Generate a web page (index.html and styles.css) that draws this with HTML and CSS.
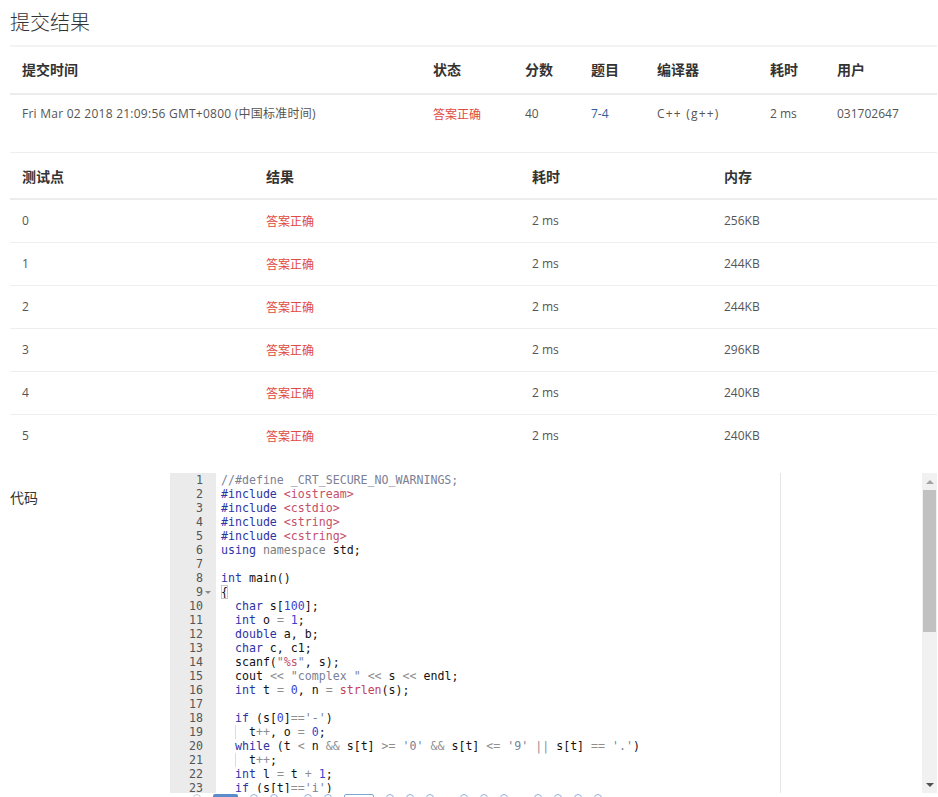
FILE: index.html
```html
<!DOCTYPE html>
<html lang="zh-CN">
<head>
<meta charset="utf-8">
<title>提交结果</title>
<link rel="stylesheet" href="styles.css">
</head>
<body>
<div class="page">
  <h1 class="title">提交结果</h1>

  <table class="tbl summary">
    <thead>
      <tr><th>提交时间</th><th>状态</th><th>分数</th><th>题目</th><th>编译器</th><th>耗时</th><th>用户</th></tr>
    </thead>
    <tbody>
      <tr>
        <td class="date">Fri Mar 02 2018 21:09:56 GMT+0800 (中国标准时间)</td>
        <td class="ok">答案正确</td>
        <td>40</td>
        <td><a class="link" href="#">7-4</a></td>
        <td class="wide">C++ (g++)</td>
        <td>2 ms</td>
        <td>031702647</td>
      </tr>
    </tbody>
  </table>

  <table class="tbl cases">
    <thead>
      <tr><th>测试点</th><th>结果</th><th>耗时</th><th>内存</th></tr>
    </thead>
    <tbody>
      <tr><td>0</td><td class="ok">答案正确</td><td>2 ms</td><td>256KB</td></tr>
      <tr><td>1</td><td class="ok">答案正确</td><td>2 ms</td><td>244KB</td></tr>
      <tr><td>2</td><td class="ok">答案正确</td><td>2 ms</td><td>244KB</td></tr>
      <tr><td>3</td><td class="ok">答案正确</td><td>2 ms</td><td>296KB</td></tr>
      <tr><td>4</td><td class="ok">答案正确</td><td>2 ms</td><td>240KB</td></tr>
      <tr><td>5</td><td class="ok">答案正确</td><td>2 ms</td><td>240KB</td></tr>
    </tbody>
  </table>

  <div class="code-sec">
    <div class="code-label">代码</div>
    <div class="editor">
      <div class="gutter">
        <div class="gl"><span>1</span><i class="fold"></i></div>
        <div class="gl"><span>2</span><i class="fold"></i></div>
        <div class="gl"><span>3</span><i class="fold"></i></div>
        <div class="gl"><span>4</span><i class="fold"></i></div>
        <div class="gl"><span>5</span><i class="fold"></i></div>
        <div class="gl"><span>6</span><i class="fold"></i></div>
        <div class="gl"><span>7</span><i class="fold"></i></div>
        <div class="gl"><span>8</span><i class="fold"></i></div>
        <div class="gl"><span>9</span><i class="fold open"></i></div>
        <div class="gl"><span>10</span><i class="fold"></i></div>
        <div class="gl"><span>11</span><i class="fold"></i></div>
        <div class="gl"><span>12</span><i class="fold"></i></div>
        <div class="gl"><span>13</span><i class="fold"></i></div>
        <div class="gl"><span>14</span><i class="fold"></i></div>
        <div class="gl"><span>15</span><i class="fold"></i></div>
        <div class="gl"><span>16</span><i class="fold"></i></div>
        <div class="gl"><span>17</span><i class="fold"></i></div>
        <div class="gl"><span>18</span><i class="fold"></i></div>
        <div class="gl"><span>19</span><i class="fold"></i></div>
        <div class="gl"><span>20</span><i class="fold"></i></div>
        <div class="gl"><span>21</span><i class="fold"></i></div>
        <div class="gl"><span>22</span><i class="fold"></i></div>
        <div class="gl"><span>23</span><i class="fold"></i></div>
      </div>
      <div class="code">
        <div class="ln"><span class="c">//#define _CRT_SECURE_NO_WARNINGS;</span></div>
        <div class="ln"><span class="k">#include</span> <span class="s">&lt;iostream&gt;</span></div>
        <div class="ln"><span class="k">#include</span> <span class="s">&lt;cstdio&gt;</span></div>
        <div class="ln"><span class="k">#include</span> <span class="s">&lt;string&gt;</span></div>
        <div class="ln"><span class="k">#include</span> <span class="s">&lt;cstring&gt;</span></div>
        <div class="ln"><span class="k">using</span> <span class="ns">namespace</span> std;</div>
        <div class="ln"> </div>
        <div class="ln"><span class="k">int</span> main()</div>
        <div class="ln"><span class="br">{</span></div>
        <div class="ln">  <span class="k">char</span> s[<span class="n">100</span>];</div>
        <div class="ln">  <span class="k">int</span> o <span class="op">=</span> <span class="n">1</span>;</div>
        <div class="ln">  <span class="k">double</span> a, b;</div>
        <div class="ln">  <span class="k">char</span> c, c1;</div>
        <div class="ln">  scanf(<span class="str">"<span class="fmt">%s</span>"</span>, s);</div>
        <div class="ln">  cout <span class="op">&lt;&lt;</span> <span class="str">"complex "</span> <span class="op">&lt;&lt;</span> s <span class="op">&lt;&lt;</span> endl;</div>
        <div class="ln">  <span class="k">int</span> t <span class="op">=</span> <span class="n">0</span>, n <span class="op">=</span> <span class="sup">strlen</span>(s);</div>
        <div class="ln"> </div>
        <div class="ln">  <span class="k">if</span> (s[<span class="n">0</span>]<span class="op">==</span><span class="str">'-'</span>)</div>
        <div class="ln">  <span class="ind">  </span>t<span class="op">++</span>, o <span class="op">=</span> <span class="n">0</span>;</div>
        <div class="ln">  <span class="k">while</span> (t <span class="op">&lt;</span> n <span class="op">&amp;&amp;</span> s[t] <span class="op">&gt;=</span> <span class="str">'0'</span> <span class="op">&amp;&amp;</span> s[t] <span class="op">&lt;=</span> <span class="str">'9'</span> <span class="op">||</span> s[t] <span class="op">==</span> <span class="str">'.'</span>)</div>
        <div class="ln">  <span class="ind">  </span>t<span class="op">++</span>;</div>
        <div class="ln">  <span class="k">int</span> l <span class="op">=</span> t <span class="op">+</span> <span class="n">1</span>;</div>
        <div class="ln">  <span class="k">if</span> (s[t]<span class="op">==</span><span class="str">'i'</span>)</div>
      </div>
      <div class="vscroll">
        <div class="sb-btn"><i class="arr up"></i></div>
        <div class="sb-thumb"></div>
        <div class="sb-track"></div>
        <div class="sb-btn"><i class="arr down"></i></div>
      </div>
    </div>
  </div>

  <div class="peek">
    <i class="pk dot g"></i>
    <i class="pk bar"></i>
    <i class="pk dot"></i>
    <i class="pk dot"></i>
    <i class="pk dot w1"></i>
    <i class="pk dot"></i>
    <i class="pk box"></i>
    <i class="pk dot"></i>
    <i class="pk dot"></i>
    <i class="pk dot"></i>
    <i class="pk dot w1"></i>
    <i class="pk dot"></i>
    <i class="pk dot"></i>
    <i class="pk dot w1"></i>
    <i class="pk dot"></i>
    <i class="pk dot"></i>
    <i class="pk dot"></i>
  </div>
</div>
</body>
</html>
```

FILE: styles.css
```css
html, body {
  margin: 0;
  padding: 0;
  background: #fff;
  overflow: hidden;
}

body {
  font-family: "Open Sans", "Noto Sans CJK SC", sans-serif;
  color: #555;
  font-size: 12px;
}

.page {
  padding: 0 1px 0 10px;
}

.title {
  margin: 0;
  padding-top: 8px;
  font-family: "Noto Sans CJK SC", sans-serif;
  font-size: 20px;
  line-height: 28px;
  font-weight: 300;
  color: #333;
}

.tbl {
  width: 927px;
  table-layout: fixed;
  border-collapse: separate;
  border-spacing: 0;
}

.tbl th {
  text-align: left;
  font-family: "Noto Sans CJK SC", sans-serif;
  font-size: 14px;
  font-weight: bold;
  color: #333;
  line-height: 18px;
  padding: 13px 12px 15px;
  border-bottom: 2px solid #ececec;
}

.tbl td {
  text-align: left;
  font-size: 12px;
  line-height: 18px;
  color: #555;
  padding: 12px 12px;
  border-bottom: 1px solid #eeeeee;
  white-space: nowrap;
}

.summary {
  margin-top: 9px;
}

.summary th {
  border-top: 2px solid #f3f3f3;
}

.summary td {
  padding: 10px 12px 29px;
}

.summary td.date {
  letter-spacing: 0.25px;
}

.summary td.wide {
  letter-spacing: 1.2px;
}

.summary th:nth-child(1) { width: 387px; }
.summary th:nth-child(2) { width: 68px; }
.summary th:nth-child(3) { width: 42px; }
.summary th:nth-child(4) { width: 42px; }
.summary th:nth-child(5) { width: 89px; }
.summary th:nth-child(6) { width: 43px; }
.summary th:nth-child(7) { width: 88px; }

.cases th {
  padding: 14px 12px 13px;
}

.cases th:nth-child(1) { width: 220px; }
.cases th:nth-child(2) { width: 242px; }
.cases th:nth-child(3) { width: 168px; }
.cases th:nth-child(4) { width: 201px; }

.cases tbody tr:last-child td {
  border-bottom: none;
}

.ok {
  font-family: "Noto Sans CJK SC", sans-serif;
}

.tbl td.ok {
  color: #e04a3f;
}

.link {
  color: #2f6196;
  text-decoration: none;
}

/* code section */
.code-sec {
  display: flex;
  margin-top: 16px;
}

.code-label {
  width: 160px;
  flex: none;
  padding-top: 15px;
  font-family: "Noto Sans CJK SC", sans-serif;
  font-size: 14px;
  line-height: 18px;
  color: #333;
}

.editor {
  flex: 1;
  display: flex;
  height: 320px;
  overflow: hidden;
  font-family: "DejaVu Sans Mono", "Liberation Mono", monospace;
  font-size: 11.6px;
  line-height: 14px;
  background: #fff;
}

.gutter {
  width: 46px;
  flex: none;
  background: #ebebeb;
  color: #555;
}

.gl {
  display: flex;
  justify-content: flex-end;
  padding-right: 3px;
  height: 14px;
}

.fold {
  width: 10px;
  flex: none;
  display: flex;
  align-items: center;
  justify-content: center;
}

.fold.open::before {
  content: "";
  border-left: 3px solid transparent;
  border-right: 3px solid transparent;
  border-top: 3px solid #8a8a8a;
  margin-top: 1px;
}

.code {
  flex: 1;
  padding-left: 5px;
  color: #111;
  overflow: hidden;
  background: linear-gradient(to right, transparent 564px, #e6e6e6 564px, #e6e6e6 565px, transparent 565px);
}

.ln {
  height: 14px;
  white-space: pre;
}

.c { color: #7b8096; }
.k { color: #2c33a6; }
.s { color: #c4506a; }
.ns { color: #7d7d7d; }
.n { color: #3a3fd0; }
.str { color: #7a7f98; }
.fmt { color: #c4506a; }
.op { color: #8e8e8e; }
.sup { color: #c0405e; }
.br { outline: 1px solid #c8c8c8; outline-offset: -1px; }
.ind { background: linear-gradient(to right, #dcdcdc 0, #dcdcdc 1px, transparent 1px); }

.vscroll {
  width: 15px;
  flex: none;
  display: flex;
  flex-direction: column;
  background: #f1f1f1;
}

.sb-btn {
  height: 17px;
  flex: none;
  display: flex;
  align-items: center;
  justify-content: center;
}

.arr {
  width: 0;
  height: 0;
  border-left: 4px solid transparent;
  border-right: 4px solid transparent;
}

.arr.up {
  border-bottom: 4px solid #a3a3a3;
}

.arr.down {
  border-top: 4px solid #505050;
}

.sb-thumb {
  height: 142px;
  flex: none;
  margin: 0 1px;
  background: #c1c1c1;
}

.sb-track {
  flex: 1;
}

/* peek of the toolbar below */
.peek {
  display: flex;
  align-items: flex-start;
  height: 4px;
  padding-top: 1px;
  padding-left: 183px;
  gap: 12px;
}

.pk {
  display: block;
  flex: none;
}

.pk.dot {
  width: 8px;
  height: 8px;
  border: 1px solid #8fb0da;
  border-radius: 50%;
  box-sizing: border-box;
}

.pk.dot.g {
  border-color: #c0c6d2;
}

.pk.dot.w1 {
  margin-left: 14px;
}

.pk.bar {
  width: 25px;
  height: 6px;
  background: #5a8ccb;
  border-radius: 2px;
}

.pk.box {
  width: 30px;
  height: 8px;
  border: 1px solid #7fa5d4;
  border-radius: 2px;
  box-sizing: border-box;
}
```
